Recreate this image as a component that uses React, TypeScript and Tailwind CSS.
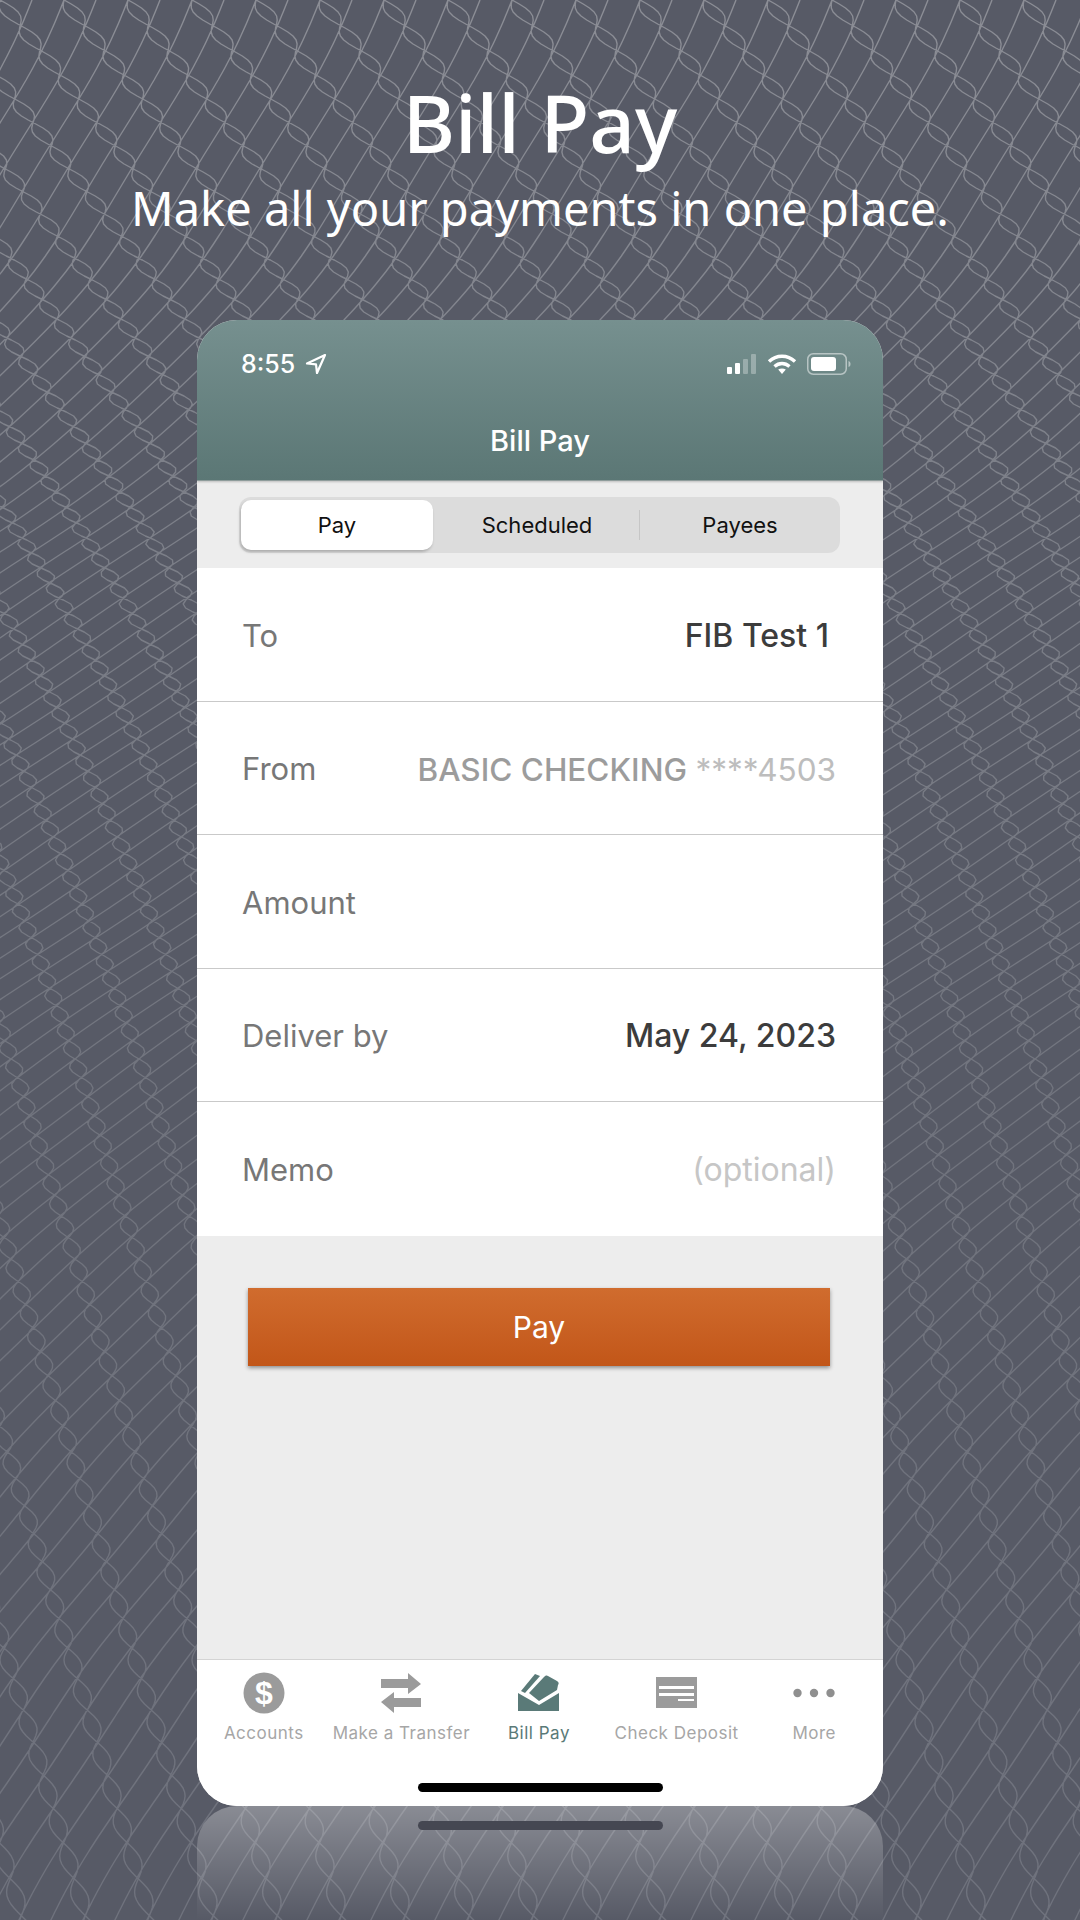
import React from "react";

const lerpTable = (pts: number[][], y: number) => {
  for (let k = 1; k < pts.length; k++) {
    if (y <= pts[k][0]) {
      const [a, va] = pts[k - 1];
      const [b, vb] = pts[k];
      return va + ((vb - va) * (y - a)) / (b - a);
    }
  }
  return pts[pts.length - 1][1];
};
const UP = [[0, 0.45], [250, 0.7], [550, 1.5], [1000, 1.5], [1400, 0.95], [1920, 0.55]];
const DOWN = [[0, 0.8], [400, 0.75], [800, 0.45], [1100, 0.32], [1920, 0.3]];
const STEP = 4;
const ROWS = Math.ceil(1960 / STEP);
const XU: number[] = [0];
const XD: number[] = [0];
for (let k = 1; k <= ROWS; k++) {
  const y = k * STEP;
  XU[k] = XU[k - 1] + lerpTable(UP, y) * STEP;
  XD[k] = XD[k - 1] + lerpTable(DOWN, y) * STEP;
}
const hidden = (x: number, y: number) => x > 215 && x < 865 && y > 340 && y < 1790;
const offscreen = (x: number) => x < -20 || x > 1100;
const trace = (fx: (k: number) => number) => {
  let out = "";
  let pen = false;
  for (let k = 0; k <= ROWS; k++) {
    const x = fx(k);
    const y = k * STEP;
    if (offscreen(x) || hidden(x, y)) {
      pen = false;
      continue;
    }
    out += `${pen ? "L" : "M"}${x.toFixed(1)} ${y}`;
    pen = true;
  }
  return out;
};
const H = 32;
const COL = 64;
const patternPath = (() => {
  const parts: string[] = [];
  const maxU = XU[ROWS];
  const maxD = XD[ROWS];
  for (let n = -2; n * H < 1100 + maxU; n++) {
    const c = n * H;
    parts.push(trace((k) => c - XU[k] + 2 * Math.sin((k * STEP) / 34)));
  }
  for (let m = Math.floor(-(maxD + 40) / COL); m * COL < 1120; m++) {
    const c = m * COL;
    const wave = (k: number) => 8.5 * Math.sin((Math.PI * (XU[k] + XD[k])) / H);
    parts.push(trace((k) => c + XD[k] + wave(k)));
    parts.push(trace((k) => c + XD[k] - wave(k)));
  }
  return parts.join("");
})();

function Texture() {
  return (
    <svg className="absolute inset-0" width="1080" height="1920" viewBox="0 0 1080 1920" aria-hidden="true">
      <defs>
        <linearGradient id="tex" gradientUnits="userSpaceOnUse" x1="0" y1="0" x2="0" y2="1920">
          <stop offset="0" stopColor="#8b8d95" />
          <stop offset="0.25" stopColor="#7d8089" />
          <stop offset="0.6" stopColor="#70737d" />
          <stop offset="1" stopColor="#6f727d" />
        </linearGradient>
      </defs>
      <path d={patternPath} fill="none" stroke="url(#tex)" strokeWidth="1.4" strokeLinejoin="round" />
    </svg>
  );
}

const SF = "font-['Inter','Liberation_Sans',sans-serif]";

function Row({ label, children, last }: { label: string; children?: React.ReactNode; last?: boolean }) {
  return (
    <div className={`flex h-[133.5px] items-center justify-between pl-[45px] pr-[47px] pt-[3px] ${last ? "" : "border-b border-[#c9c9c9]"}`}>
      <span className="text-[31px] text-[#777777]">{label}</span>
      {children}
    </div>
  );
}

function Tab({ label, active, children }: { label: string; active?: boolean; children: React.ReactNode }) {
  return (
    <div className="flex flex-col items-center">
      <div className="flex h-[44px] w-[44px] items-center justify-center">{children}</div>
      <span className={`mt-[7px] whitespace-nowrap text-[17px] leading-[22px] tracking-[0.5px] ${active ? "text-[#5a7a78]" : "text-[#a6a6a6]"}`}>{label}</span>
    </div>
  );
}

export default function App() {
  return (
    <div className={`relative flex h-[1920px] w-[1080px] flex-col items-center overflow-hidden bg-[#575a66] ${SF}`}>
      <Texture />
      <h1 className="relative mt-[72px] font-['Noto_Sans',sans-serif] text-[80px] font-medium leading-[100px] text-white">Bill Pay</h1>
      <p className="relative mt-[3px] whitespace-nowrap font-['Noto_Sans',sans-serif] text-[47px] leading-[66px] text-white">Make all your payments in one place.</p>

      <div className="relative mt-[79px] flex h-[1486px] w-[686px] flex-col overflow-hidden rounded-[40px] bg-[#ededed]">
        <header className="relative h-[161px] border-b border-[#8e9c9b] bg-gradient-to-b from-[#76908f] to-[#5b7775] text-white shadow-[0_1px_2px_rgba(0,0,0,0.2)]">
          <div className="flex items-center justify-between pl-[44px] pr-[32px] pt-[26px]">
            <div className="flex items-center gap-[10px]">
              <span className="text-[25px] font-medium leading-[36px]">8:55</span>
              <svg width="22" height="22" viewBox="0 0 22 22" fill="none" stroke="white" strokeWidth="2.2" strokeLinejoin="round"><path d="M20 2 2 10.500l9 .8 1 8.700z" /></svg>
            </div>
            <div className="flex items-center gap-[10px]">
              <svg width="30" height="20" viewBox="0 0 30 20">
                <rect x="0" y="13" width="5" height="7" rx="1" fill="#fff" />
                <rect x="8" y="9" width="5" height="11" rx="1" fill="#fff" />
                <rect x="16" y="5" width="5" height="15" rx="1" fill="#fff" fillOpacity="0.3" />
                <rect x="24" y="0" width="5" height="20" rx="1" fill="#fff" fillOpacity="0.3" />
              </svg>
              <svg width="30" height="22" viewBox="0 0 30 22" fill="none" stroke="white" strokeWidth="3.4">
                <path d="M2 8.500C9.500 1.500 20.500 1.500 28 8.500" />
                <path d="M7.500 13.500c4.500-4 10.500-4 15 0" />
                <path d="M15 21l-3.800-4.400c2.200-1.600 5.400-1.600 7.600 0z" fill="white" stroke="none" />
              </svg>
              <svg width="44" height="22" viewBox="0 0 44 22">
                <rect x="0.75" y="0.75" width="38.5" height="20.5" rx="5.5" fill="none" stroke="#fff" strokeOpacity="0.5" strokeWidth="1.5" />
                <rect x="4" y="4" width="25" height="14" rx="3" fill="#fff" />
                <path d="M41.500 8v6c1.500-.5 2-1.500 2-3s-.5-2.500-2-3z" fill="#fff" fillOpacity="0.5" />
              </svg>
            </div>
          </div>
          <div className="mt-[39px] text-center text-[29px] font-medium leading-[40px]">Bill Pay</div>
        </header>

        <div className="flex h-[87px] items-center pl-[42px] pr-[43px]">
          <div className="flex h-[56px] w-[601px] items-center rounded-[12px] bg-[#dcdcdc] pl-[2px] text-[22px] leading-none text-[#111111]">
            <div className="flex h-[50px] w-[192px] items-center justify-center rounded-[10px] bg-white shadow-[-1px_2px_3px_rgba(0,0,0,0.22)]">Pay</div>
            <div className="flex w-[206px] items-center justify-center pl-[2px]">Scheduled</div>
            <div className="h-[30px] w-px bg-[#c6c6c6]" />
            <div className="flex flex-1 items-center justify-center">Payees</div>
          </div>
        </div>

        <div className="bg-white">
          <Row label="To"><span className="pr-[7px] text-[32px] font-medium text-[#3c3c3c]">FIB Test 1</span></Row>
          <Row label="From">
            <span className="whitespace-nowrap text-[31.5px] font-medium text-[#9c9c9c]">BASIC CHECKING <span className="font-normal text-[#bdbdbd]">****4503</span></span>
          </Row>
          <Row label="Amount" />
          <Row label="Deliver by"><span className="text-[32px] font-medium text-[#3c3c3c]">May 24, 2023</span></Row>
          <Row label="Memo" last><span className="text-[32px] text-[#c6c6c6]">(optional)</span></Row>
        </div>

        <div className="flex flex-1 flex-col">
          <button className="ml-[51px] mt-[52px] flex h-[78px] w-[582px] items-center justify-center bg-gradient-to-b from-[#d06c2e] to-[#c25618] pt-[2px] text-[30px] text-white shadow-[0_2px_4px_rgba(0,0,0,0.4)]">Pay</button>
        </div>

        <nav className="flex h-[147px] flex-col border-t border-[#d4d4d4] bg-white">
          <div className="ml-[-2px] grid grid-cols-5 pt-[11px]">
            <Tab label="Accounts">
              <svg width="42" height="42" viewBox="0 0 42 42">
                <circle cx="21" cy="21" r="20.5" fill="#9b9b9b" />
                <text x="21" y="32" textAnchor="middle" fontSize="32" fontWeight="800" fill="#fff" fontFamily="Liberation Sans">$</text>
              </svg>
            </Tab>
            <Tab label="Make a Transfer">
              <svg width="42" height="40" viewBox="0 0 42 40" fill="#9b9b9b">
                <path d="M1 6h27V0l13 11-13 10v-6H1z" />
                <path d="M41 25H14v-6L1 29l13 11v-6h27z" />
              </svg>
            </Tab>
            <Tab label="Bill Pay" active>
              <svg width="42" height="38" viewBox="0 0 42 38" fill="#5a7a78">
                <path d="M0 19l21 12 20-12v18H0z" />
                <path d="M3 17 17 0l5 2L7 19z" />
                <path d="M11 19 26 3c1-1.500 3-2 4-1l9 5c2 1 2 3 1 4l-1 5-18 11z" />
              </svg>
            </Tab>
            <Tab label="Check Deposit">
              <svg width="42" height="32" viewBox="0 0 42 32" fill="#9b9b9b">
                <path fillRule="evenodd" d="M0 0h41v31H0zM3 9h35v3H3zM3 16h35v3H3zM22 24h16v-2H22z" />
              </svg>
            </Tab>
            <Tab label="More">
              <svg width="42" height="10" viewBox="0 0 42 10" fill="#8f8f8f">
                <circle cx="4.500" cy="5" r="4.200" />
                <circle cx="21" cy="5" r="4.200" />
                <circle cx="37.500" cy="5" r="4.200" />
              </svg>
            </Tab>
          </div>
          <div className="mx-auto mt-[39px] h-[9px] w-[245px] rounded-full bg-black" />
        </nav>
      </div>

      <div className="relative flex h-[114px] w-[686px] justify-center rounded-t-[40px] bg-gradient-to-b from-white/30 to-white/0 pt-[15px]">
        <div className="h-[9px] w-[245px] rounded-full bg-[#454752]" />
      </div>
    </div>
  );
}
